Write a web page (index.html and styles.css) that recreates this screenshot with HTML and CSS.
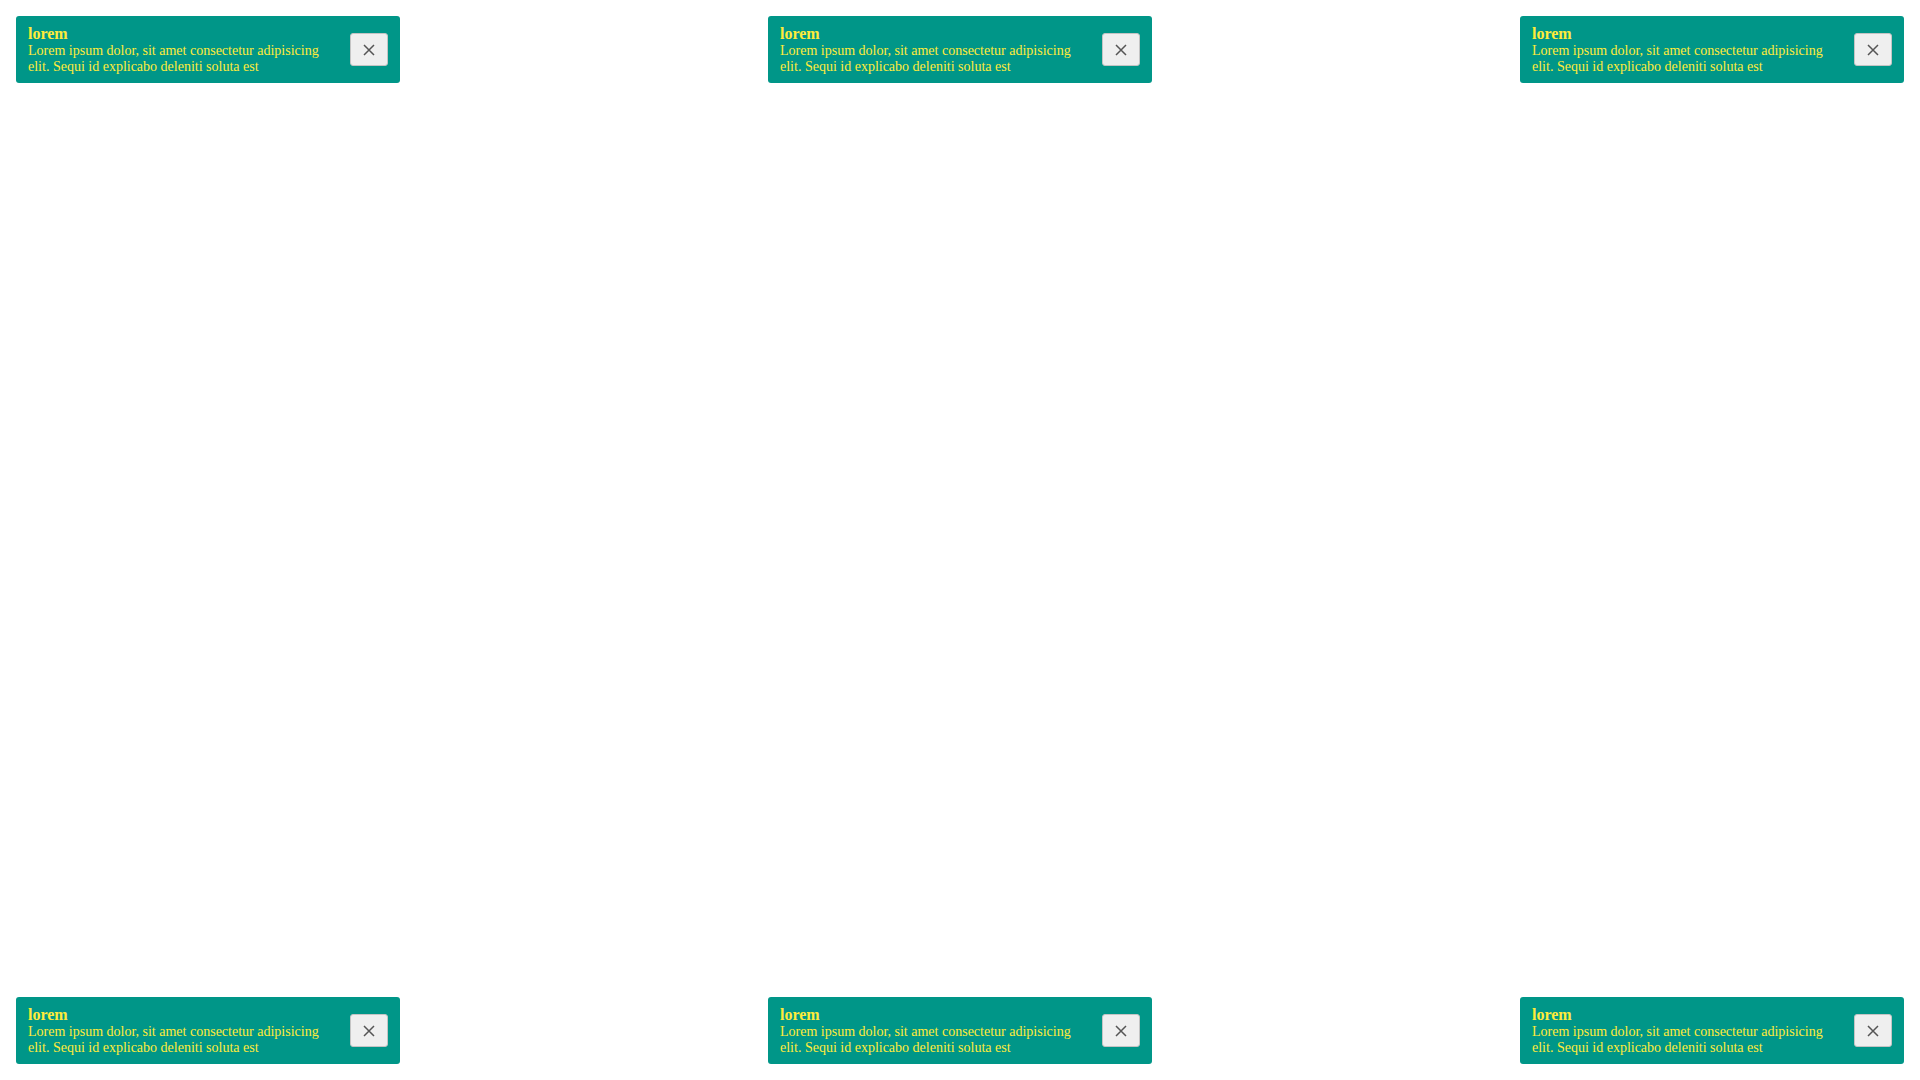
FILE: index.html
```html
<!DOCTYPE html>
<html lang="en">
<head>
<meta charset="utf-8">
<title>Toasts</title>
<link rel="stylesheet" href="styles.css">
</head>
<body>
<div class="page">
  <div class="toast">
    <div class="toast-text"><div class="toast-title">lorem</div><div class="toast-body">Lorem ipsum dolor, sit amet consectetur adipisicing elit. Sequi id explicabo deleniti soluta est</div></div>
    <button class="toast-close" aria-label="close"><svg viewBox="0 0 12 12" width="12" height="12"><path d="M1 1L11 11M11 1L1 11" stroke="#555" stroke-width="1.5" fill="none"/></svg></button>
  </div>
  <div class="toast">
    <div class="toast-text"><div class="toast-title">lorem</div><div class="toast-body">Lorem ipsum dolor, sit amet consectetur adipisicing elit. Sequi id explicabo deleniti soluta est</div></div>
    <button class="toast-close" aria-label="close"><svg viewBox="0 0 12 12" width="12" height="12"><path d="M1 1L11 11M11 1L1 11" stroke="#555" stroke-width="1.5" fill="none"/></svg></button>
  </div>
  <div class="toast">
    <div class="toast-text"><div class="toast-title">lorem</div><div class="toast-body">Lorem ipsum dolor, sit amet consectetur adipisicing elit. Sequi id explicabo deleniti soluta est</div></div>
    <button class="toast-close" aria-label="close"><svg viewBox="0 0 12 12" width="12" height="12"><path d="M1 1L11 11M11 1L1 11" stroke="#555" stroke-width="1.5" fill="none"/></svg></button>
  </div>
  <div class="toast">
    <div class="toast-text"><div class="toast-title">lorem</div><div class="toast-body">Lorem ipsum dolor, sit amet consectetur adipisicing elit. Sequi id explicabo deleniti soluta est</div></div>
    <button class="toast-close" aria-label="close"><svg viewBox="0 0 12 12" width="12" height="12"><path d="M1 1L11 11M11 1L1 11" stroke="#555" stroke-width="1.5" fill="none"/></svg></button>
  </div>
  <div class="toast">
    <div class="toast-text"><div class="toast-title">lorem</div><div class="toast-body">Lorem ipsum dolor, sit amet consectetur adipisicing elit. Sequi id explicabo deleniti soluta est</div></div>
    <button class="toast-close" aria-label="close"><svg viewBox="0 0 12 12" width="12" height="12"><path d="M1 1L11 11M11 1L1 11" stroke="#555" stroke-width="1.5" fill="none"/></svg></button>
  </div>
  <div class="toast">
    <div class="toast-text"><div class="toast-title">lorem</div><div class="toast-body">Lorem ipsum dolor, sit amet consectetur adipisicing elit. Sequi id explicabo deleniti soluta est</div></div>
    <button class="toast-close" aria-label="close"><svg viewBox="0 0 12 12" width="12" height="12"><path d="M1 1L11 11M11 1L1 11" stroke="#555" stroke-width="1.5" fill="none"/></svg></button>
  </div>
</div>
</body>
</html>
```
FILE: styles.css
```css
html, body {
  margin: 0;
  padding: 0;
  background: #ffffff;
}
body {
  font-family: "Liberation Serif", "Times New Roman", serif;
}
.page {
  box-sizing: border-box;
  height: 100vh;
  padding: 16px;
  display: grid;
  grid-template-columns: repeat(3, 384px);
  grid-template-rows: auto auto;
  justify-content: space-between;
  align-content: space-between;
}
.toast {
  box-sizing: border-box;
  width: 384px;
  background: #009688;
  color: #ffeb3b;
  border-radius: 3px;
  padding: 8px 12px;
  display: flex;
  align-items: center;
  gap: 16px;
}
.toast-text {
  flex: 1;
  min-width: 0;
}
.toast-title {
  font-weight: bold;
  font-size: 16px;
  line-height: 19px;
}
.toast-body {
  font-size: 14px;
  line-height: 16px;
}
.toast-close {
  flex: none;
  width: 38px;
  height: 33px;
  padding: 0;
  background: #efefef;
  border: 1px solid #c4c4c4;
  border-radius: 3px;
  display: flex;
  align-items: center;
  justify-content: center;
}
.toast-close svg {
  display: block;
}
```
